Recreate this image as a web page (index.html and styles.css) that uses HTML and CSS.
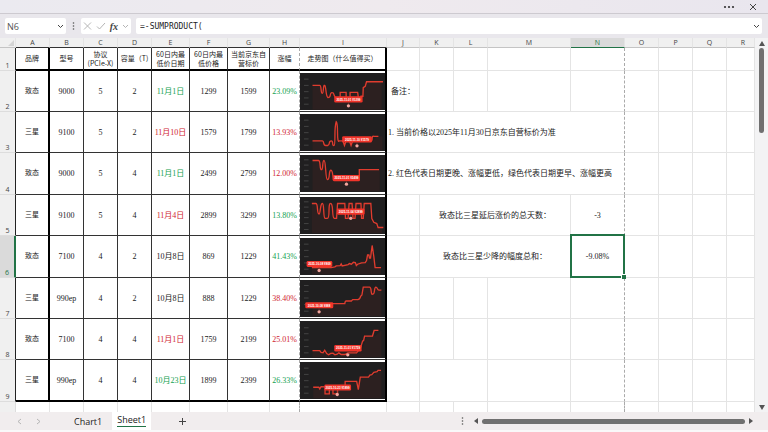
FILE: index.html
```html
<!DOCTYPE html>
<html lang="zh-CN">
<head>
<meta charset="utf-8">
<title>Sheet1</title>
<link rel="stylesheet" href="styles.css">
</head>
<body>
<div class="app">
  <header class="titlebar">
    <button class="icon-btn" aria-label="更多"><svg width="12" height="4" viewBox="0 0 12 4"><circle cx="2" cy="2" r="1.1"/><circle cx="6" cy="2" r="1.1"/><circle cx="10" cy="2" r="1.1"/></svg></button>
    <button class="icon-btn" aria-label="关闭"><svg class="line" width="8" height="8" viewBox="0 0 8 8"><path d="M1 1l6 6M7 1L1 7"/></svg></button>
  </header>

  <div class="formula-row">
    <div class="box name-box">
      <input aria-label="名称框" value="N6">
      <button class="icon-btn" aria-label="展开名称框"><svg class="line" width="7" height="5" viewBox="0 0 7 5"><path d="M1 1l2.5 2.5L6 1"/></svg></button>
    </div>
    <svg class="dots" width="3" height="8" viewBox="0 0 3 8"><circle cx="1.5" cy="1" r=".8"/><circle cx="1.5" cy="4" r=".8"/><circle cx="1.5" cy="7" r=".8"/></svg>
    <div class="box fx-box">
      <button class="icon-btn pale" aria-label="取消"><svg class="line" width="9" height="8" viewBox="0 0 9 8"><path d="M1 .5l7 7M8 .5l-7 7"/></svg></button>
      <button class="icon-btn pale" aria-label="输入"><svg class="line" width="10" height="8" viewBox="0 0 10 8"><path d="M1 4.5l2.5 2.5L9 1"/></svg></button>
      <button class="icon-btn fx" aria-label="插入函数"><i>fx</i></button>
      <button class="icon-btn pale" aria-label="函数列表"><svg class="line" width="7" height="5" viewBox="0 0 7 5"><path d="M1 1l2.5 2.5L6 1"/></svg></button>
    </div>
    <div class="box formula-box">
      <input aria-label="编辑栏" value="=-SUMPRODUCT(">
      <button class="icon-btn" aria-label="展开编辑栏"><svg class="line" width="7" height="5" viewBox="0 0 7 5"><path d="M1 1l2.5 2.5L6 1"/></svg></button>
    </div>
  </div>

  <main class="workspace">
    <div class="grid-area">
      <table class="sheet">
        <colgroup>
          <col class="w-head"><col class="w-std"><col class="w-std"><col class="w-std"><col class="w-std"><col class="w-price"><col class="w-price"><col class="w-now"><col class="w-rise"><col class="w-trend"><col class="w-note"><col class="w-std"><col class="w-std"><col class="w-m"><col class="w-n"><col class="w-std"><col class="w-std"><col class="w-std"><col>
        </colgroup>
        <thead>
          <tr><th class="corner"><svg width="6" height="6" viewBox="0 0 6 6"><path d="M6 0v6H0z"/></svg></th><th class="d">A</th><th class="d">B</th><th class="d">C</th><th class="d">D</th><th class="d">E</th><th class="d">F</th><th class="d">G</th><th class="d">H</th><th class="d">I</th><th>J</th><th>K</th><th>L</th><th>M</th><th class="active">N</th><th>O</th><th>P</th><th>Q</th><th class="cut">R</th></tr>
        </thead>
        <tbody>
          <tr class="titles"><th>1</th><td class="d brand">品牌</td><td class="d">型号</td><td class="d">协议<br>(PCIe-X)</td><td class="d">容量（T)</td><td class="d">60日内最<br>低价日期</td><td class="d">60日内最<br>低价格</td><td class="d">当前京东自<br>营标价</td><td class="d rise">涨幅</td><td class="d trend">走势图（什么值得买）</td><td></td><td></td><td></td><td></td><td class="page-end"></td><td></td><td></td><td></td><td></td></tr>

          <tr><th>2</th><td class="d brand">致态</td><td class="d">9000</td><td class="d">5</td><td class="d">2</td><td class="d green">11月1日</td><td class="d">1299</td><td class="d">1599</td><td class="d rise green">23.09%</td>
            <td class="d trend"><svg class="chart" viewBox="0 0 258 111"><path class="axis" d="M12 18h14M12 37h14M12 56h14M12 75h14M12 94h14"/><path class="area" d="M38 37h24l4 23 7-23 7 38h6l6-15h6l6 12 6 10h10l2-24h18v20h12v-20h23l5 28 5-16 5-28 8-16h50v85H38z"/><path class="trace" d="M38 37h22q3 0 4 12t4 12q2 0 3-13t4-11q2 1 4 18t6 19q6 0 7-8t6-7q4 0 6 9l6 10h12V58h18v22h12V58h23l3 22q1 8 5 4l2-14h6l1-26 6-4 4-14h50"/><rect class="tag" x="104" y="70" width="86" height="19" rx="4"/><text x="147" y="83">2025-11-01 ¥1299</text><path class="stem" d="M147 89v10"/><circle class="pin" cx="147" cy="99" r="5"/></svg></td>
            <td>备注：</td><td></td><td></td><td></td><td class="page-end"></td><td></td><td></td><td></td><td></td></tr>

          <tr><th>3</th><td class="d brand">三星</td><td class="d">9100</td><td class="d">5</td><td class="d">2</td><td class="d red">11月10日</td><td class="d">1579</td><td class="d">1799</td><td class="d rise red">13.93%</td>
            <td class="d trend"><svg class="chart" viewBox="0 0 258 111"><path class="axis" d="M12 18h14M12 37h14M12 56h14M12 75h14M12 94h14"/><path class="area" d="M38 81h32l4 14h14l8-14 7 14 7-73 7 59h105l12-14h16v42H38z"/><path class="trace" d="M38 81h30q3 0 4 7t6 7h6q4 0 5-7t6-7q4 0 4 7t4 7q3 0 3-30t4-42q4 4 4 34t5 24h11l5 14 5-14h10l5 14 5-14h56q3 0 3-8t5-6h14"/><rect class="tag" x="128" y="67" width="90" height="19" rx="4"/><text x="173" y="80">2025-11-10 ¥1579</text><path class="stem" d="M173 86v10"/><circle class="pin" cx="173" cy="96" r="5"/></svg></td>
            <td class="note page-end" colspan="5">1. 当前价格以2025年11月30日京东自营标价为准</td><td></td><td></td><td></td><td></td></tr>

          <tr class="tall"><th>4</th><td class="d brand">致态</td><td class="d">9000</td><td class="d">5</td><td class="d">4</td><td class="d green">11月1日</td><td class="d">2499</td><td class="d">2799</td><td class="d rise red">12.00%</td>
            <td class="d trend"><svg class="chart" viewBox="0 0 258 111"><path class="axis" d="M12 14h14M12 30h14M12 46h14M12 62h14M12 78h14M12 96h14"/><path class="area" d="M38 16h20l8 28 7-28 8 58 12-28 8 28h79V44h62v65H38z"/><path class="trace" d="M38 16h18q4 0 5 14t4 14q3 0 4-14t4-14q3 0 5 29t5 29q5 0 6-15t6-13q4 2 6 28h79V44h60"/><rect class="tag" x="100" y="60" width="82" height="19" rx="4"/><text x="141" y="73">2025-11-01 ¥2499</text><path class="stem" d="M141 79v10"/><circle class="pin" cx="141" cy="88" r="5"/></svg></td>
            <td class="note page-end" colspan="5">2. 红色代表日期更晚、涨幅更低，绿色代表日期更早、涨幅更高</td><td></td><td></td><td></td><td></td></tr>

          <tr><th>5</th><td class="d brand">三星</td><td class="d">9100</td><td class="d">5</td><td class="d">4</td><td class="d red">11月4日</td><td class="d">2899</td><td class="d">3299</td><td class="d rise green">13.80%</td>
            <td class="d trend"><svg class="chart" viewBox="0 0 258 111"><path class="axis" d="M12 14h14M12 30h14M12 46h14M12 62h14M12 80h14M12 98h14"/><path class="area" d="M36 19h172l5 48 22 25h14v17H36z"/><path class="trace" d="M36 19h12q4 0 5 16t5 16q2 0 4-16t6-16q3 0 4 22t4 23h7q5 0 5-23t5-22q5 0 6 22t5 23h7l3-45h22l2 45h8l3-45h9l3 45h6l3-45h15l2 45h5l3-45h20l3 46 6 11 9 4 4 12 16 0"/><rect class="tag" x="112" y="34" width="84" height="19" rx="4"/><text x="154" y="47">2025-11-04 ¥2899</text><path class="stem" d="M154 53v10"/><circle class="pin" cx="154" cy="64" r="5"/></svg></td>
            <td></td><td class="label" colspan="3">致态比三星延后涨价的总天数：</td><td class="page-end">-3</td><td></td><td></td><td></td><td></td></tr>

          <tr class="tall current"><th>6</th><td class="d brand">致态</td><td class="d">7100</td><td class="d">4</td><td class="d">2</td><td class="d">10月8日</td><td class="d">869</td><td class="d">1229</td><td class="d rise green">41.43%</td>
            <td class="d trend"><svg class="chart" viewBox="0 0 258 111"><path class="axis" d="M12 18h14M12 37h14M12 56h14M12 75h14M12 94h14"/><path class="area" d="M36 89h64l50-10 50-12 20-43 8 64h18v21H36z"/><path class="trace" d="M36 89h58l12-2 4-3 12-1 3-5 3 6 18-4 4-3 6 2 6-6 6 1 3 9 4-4 12-4 11-1 4-6 3-17h4l2 9h3l5-38 5 33 4 34h18"/><rect class="tag" x="20" y="69" width="78" height="18" rx="4"/><text x="59" y="82">2025-10-08 ¥869</text><path class="stem" d="M58 87v11"/><circle class="pin" cx="58" cy="98" r="5"/></svg></td>
            <td></td><td class="label" colspan="3">致态比三星少降的幅度总和：</td><td class="selected">-9.08%</td><td></td><td></td><td></td><td></td></tr>

          <tr><th>7</th><td class="d brand">三星</td><td class="d">990ep</td><td class="d">4</td><td class="d">2</td><td class="d">10月8日</td><td class="d">888</td><td class="d">1229</td><td class="d rise red">38.40%</td>
            <td class="d trend"><svg class="chart" viewBox="0 0 258 111"><path class="axis" d="M12 16h14M12 34h14M12 54h14M12 74h14M12 94h14"/><path class="area" d="M38 71h100l35-10 20-40h22l32 10v78H38z"/><path class="trace" d="M38 71h98q1-8 4-8h16l4-4h15q7-1 9-10l4-4 4-24h19q4 0 5 12t5 9q4 0 5-10t4-11q3 0 5 5t6 4h6"/><rect class="tag" x="16" y="67" width="85" height="18" rx="4"/><text x="58" y="80">2025-10-08 ¥888</text><path class="stem" d="M58 85v11"/><circle class="pin" cx="58" cy="96" r="5"/></svg></td>
            <td></td><td></td><td></td><td></td><td class="page-end"></td><td></td><td></td><td></td><td></td></tr>

          <tr><th>8</th><td class="d brand">致态</td><td class="d">7100</td><td class="d">4</td><td class="d">4</td><td class="d red">11月1日</td><td class="d">1759</td><td class="d">2199</td><td class="d rise red">25.01%</td>
            <td class="d trend"><svg class="chart" viewBox="0 0 258 111"><path class="axis" d="M12 20h14M12 38h14M12 57h14M12 77h14M12 96h14"/><path class="area" d="M38 89h150l15-44h26l18-17v81H38z"/><path class="trace" d="M38 89h22l4 6 6 1 5-8 6 10 6 4 6-4 7-1 6 5 7-2 5-4 7 5h12l8-5h27q5-4 8-14l4-2 6-20 3-1 3-14h24l5-17h13"/><rect class="tag" x="104" y="72" width="83" height="20" rx="4"/><text x="146" y="85">2025-11-01 ¥1759</text><path class="stem" d="M145 92v10"/><circle class="pin" cx="145" cy="102" r="5"/></svg></td>
            <td></td><td></td><td></td><td></td><td class="page-end"></td><td></td><td></td><td></td><td></td></tr>

          <tr class="tall last"><th>9</th><td class="d brand">三星</td><td class="d">990ep</td><td class="d">4</td><td class="d">4</td><td class="d green">10月23日</td><td class="d">1899</td><td class="d">2399</td><td class="d rise green">26.33%</td>
            <td class="d trend"><svg class="chart" viewBox="0 0 258 111"><path class="axis" d="M12 18h14M12 37h14M12 56h14M12 75h14M12 94h14"/><path class="area" d="M40 76h60l38-18h40l5-12h30l34-22v85H40z"/><path class="trace" d="M40 76h17l3 5 4-7 12 1v21h13V80h11v16h14V76h23V58h35l5 25 6-38h25l4-6 6-1 6-7 10-2 3-4h9"/><rect class="tag" x="74" y="68" width="81" height="18" rx="4"/><text x="114" y="81">2025-10-23 ¥1899</text><path class="stem" d="M113 86v11"/><circle class="pin" cx="113" cy="98" r="5"/></svg></td>
            <td></td><td colspan="2"></td><td></td><td class="page-end"></td><td></td><td></td><td></td><td></td></tr>

          <tr class="stub"><th></th><td></td><td></td><td></td><td></td><td></td><td></td><td></td><td class="page-end"></td><td></td><td></td><td></td><td></td><td></td><td class="page-end"></td><td></td><td></td><td></td><td></td></tr>
        </tbody>
      </table>
    </div>
    <div class="v-scroll">
      <svg width="6" height="5" viewBox="0 0 6 5"><path d="M3 0l3 5H0z"/></svg>
      <div class="track"><div class="thumb"></div></div>
      <svg width="6" height="5" viewBox="0 0 6 5"><path d="M3 5l3-5H0z"/></svg>
    </div>
  </main>

  <footer class="tabbar">
    <nav class="tabs" aria-label="工作表">
      <button class="icon-btn pale step" aria-label="上一个"><svg class="line" width="5" height="7" viewBox="0 0 5 7"><path d="M4 1L1 3.5 4 6"/></svg></button>
      <button class="icon-btn pale step" aria-label="下一个"><svg class="line" width="5" height="7" viewBox="0 0 5 7"><path d="M1 1l3 2.5L1 6"/></svg></button>
      <button class="tab">Chart1</button>
      <button class="tab on"><span>Sheet1</span></button>
      <button class="icon-btn add" aria-label="新建工作表"><svg class="line" width="7" height="7" viewBox="0 0 7 7"><path d="M3.5 0v7M0 3.5h7"/></svg></button>
    </nav>
    <div class="h-scroll">
      <svg class="dots" width="3" height="8" viewBox="0 0 3 8"><circle cx="1.5" cy="1" r=".8"/><circle cx="1.5" cy="4" r=".8"/><circle cx="1.5" cy="7" r=".8"/></svg>
      <svg width="4" height="6" viewBox="0 0 4 6"><path d="M0 3l4-3v6z"/></svg>
      <div class="thumb"></div>
      <svg width="4" height="6" viewBox="0 0 4 6"><path d="M4 3L0 0v6z"/></svg>
    </div>
  </footer>
</div>
</body>
</html>
```
FILE: styles.css
```css
* {
  box-sizing: border-box;
}

body {
  margin: 0;
  background: #f9f8f9;
  color: #222;
  font-family: "Open Sans", "Noto Sans CJK SC", sans-serif;
  font-size: 8px;
}

button,
input {
  margin: 0;
  padding: 0;
  border: 0;
  background: none;
  color: inherit;
  font: inherit;
}

svg {
  display: block;
  flex: none;
  fill: #555;
}

svg.line {
  fill: none;
  stroke: currentColor;
}

.app {
  display: flex;
  flex-direction: column;
  height: 100vh;
  padding-bottom: 2px;
}

.icon-btn {
  display: flex;
  align-items: center;
  justify-content: center;
  color: #444;
}

.icon-btn.pale {
  color: #b5b5b5;
}

/* Title bar */
.titlebar {
  display: flex;
  align-items: center;
  justify-content: flex-end;
  gap: 14px;
  height: 14px;
  padding-right: 11px;
  border-bottom: 1px solid #cdcad0;
  background: linear-gradient(90deg, #ebeaf0, #efeaee 50%, #e9e6ee);
}

.titlebar svg {
  fill: #333;
}

.titlebar svg.line {
  fill: none;
}

/* Formula bar */
.formula-row {
  display: flex;
  align-items: center;
  gap: 5px;
  height: 24px;
  padding: 0 6px 0 5px;
  background: #e9e7ec;
}

.box {
  display: flex;
  align-items: center;
  height: 16px;
  border-radius: 2px;
  background: #fff;
}

.box input {
  flex: 1;
  min-width: 0;
  outline: 0;
}

.name-box {
  width: 61px;
  padding: 0 2px;
  color: #555;
  font-size: 9px;
}

.formula-row .dots {
  margin: 0 1px;
}

.fx-box {
  width: 50px;
  padding: 0 2px;
  justify-content: space-between;
}

.fx {
  font: bold 10px "Liberation Serif", serif;
}

.formula-box {
  flex: 1;
  padding: 0 2px 0 4px;
}

.formula-box input {
  font-family: "DejaVu Sans Mono", monospace;
}

/* Worksheet */
.workspace {
  display: flex;
  flex: 1;
  min-height: 0;
  background: #f3f3f4;
}

.grid-area {
  flex: 1;
  min-width: 0;
  overflow: hidden;
  background: #fff;
}

.sheet {
  width: 100%;
  height: 100%;
  table-layout: fixed;
  border-collapse: separate;
  border-spacing: 0;
}

.w-head { width: 16px; }
.w-std { width: 34px; }
.w-price { width: 38px; }
.w-now { width: 42px; }
.w-rise { width: 30px; }
.w-trend { width: 87px; }
.w-note { width: 33px; }
.w-m { width: 83px; }
.w-n { width: 54px; }

th,
td {
  padding: 0;
  border: 0 solid #e4e4e4;
  border-width: 0 1px 1px 0;
  text-align: center;
  white-space: nowrap;
}

th {
  background: #f0f0f0;
  color: #444;
  font-size: 7px;
  font-weight: normal;
  line-height: 8px;
}

thead th {
  height: 10px;
  border-bottom-color: #c4c4c4;
}

thead th.d {
  border-bottom-color: #333;
}

thead th.active {
  border-bottom: 1px solid #217346;
  background: #dadada;
  color: #217346;
}

thead th.cut {
  padding-left: 5px;
}

.corner svg {
  margin-left: 8px;
  fill: #d4d4d4;
}

tbody th {
  border-right-color: #222;
  border-bottom-color: #ddd;
  vertical-align: bottom;
}

tbody tr {
  height: 41px;
}

tbody tr.tall {
  height: 42px;
}

td {
  position: relative;
  font-family: "Liberation Serif", "Noto Sans CJK SC", serif;
  font-size: 8px;
  line-height: 9px;
}

td.d {
  border-color: #333;
}

td.brand {
  border-right: 2px solid #000;
  font-size: 7px;
}

td.rise,
td.page-end {
  border-right: 1px dashed #aaa;
}

td.trend {
  border-right: 2px solid #000;
}

.titles {
  height: 23px;
}

.titles td {
  font-family: "Noto Sans CJK SC", sans-serif;
  font-size: 7px;
}

.titles td.d,
.last td.d {
  border-bottom: 2px solid #000;
}

.current th {
  border-right: 2px solid #217346;
  background: #dadada;
  color: #217346;
}

.stub {
  height: auto;
}

.stub th {
  border-right-color: #ddd;
}

.stub td,
.stub th {
  border-bottom: 0;
}

.note {
  padding-left: 1px;
  text-align: left;
}

td.selected {
  z-index: 1;
}

td.selected::before {
  content: "";
  position: absolute;
  inset: -2px -1px -1px -1px;
  border: 2px solid #217346;
}

td.selected::after {
  content: "";
  position: absolute;
  right: -2px;
  bottom: -2px;
  width: 4px;
  height: 4px;
  border: 1px solid #fff;
  border-width: 1px 0 0 1px;
  background: #217346;
}

.green {
  color: #12a150;
}

.red {
  color: #cf2430;
}

/* Price trend charts */
.chart {
  width: 100%;
  height: 37px;
  background: #201f20;
}

.chart .axis {
  fill: none;
  stroke: #444;
  stroke-width: 3;
}

.chart .area {
  fill: #f03020;
  fill-opacity: 0.06;
}

.chart .trace {
  fill: none;
  stroke: #e03c2e;
  stroke-width: 4;
}

.chart .tag {
  fill: #f2342a;
}

.chart text {
  fill: #fff;
  font: bold 9px "Liberation Sans", sans-serif;
  text-anchor: middle;
}

.chart .stem {
  stroke: #8a3a34;
  stroke-width: 2;
}

.chart .pin {
  fill: #f3a59d;
}

/* Scroll bars */
.v-scroll {
  display: flex;
  flex-direction: column;
  align-items: center;
  gap: 2px;
  width: 13px;
  padding: 3px 0 2px;
}

.track {
  flex: 1;
}

.thumb {
  border-radius: 3px;
  background: #707070;
}

.track .thumb {
  width: 5px;
  height: 24%;
}

/* Sheet tabs */
.tabbar {
  display: flex;
  align-items: center;
  justify-content: space-between;
  height: 18px;
  background: #f1edee;
}

.tabs {
  display: flex;
  align-items: stretch;
  height: 18px;
  padding-left: 10px;
}

.step {
  width: 19px;
}

.tab {
  padding: 0 10px;
  font-size: 9px;
}

.step + .tab {
  margin-left: 16px;
}

.tab.on {
  padding: 0 5px 2px;
  background: #fff;
}

.tab.on span {
  display: block;
  border-bottom: 1px solid #217346;
  line-height: 12px;
}

.add {
  margin-left: 28px;
}

.h-scroll {
  display: flex;
  align-items: center;
  gap: 4px;
  width: 40%;
  padding-right: 15px;
}

.h-scroll .dots {
  margin-right: 6px;
}

.h-scroll .thumb {
  flex: 1;
  height: 5px;
}
```
